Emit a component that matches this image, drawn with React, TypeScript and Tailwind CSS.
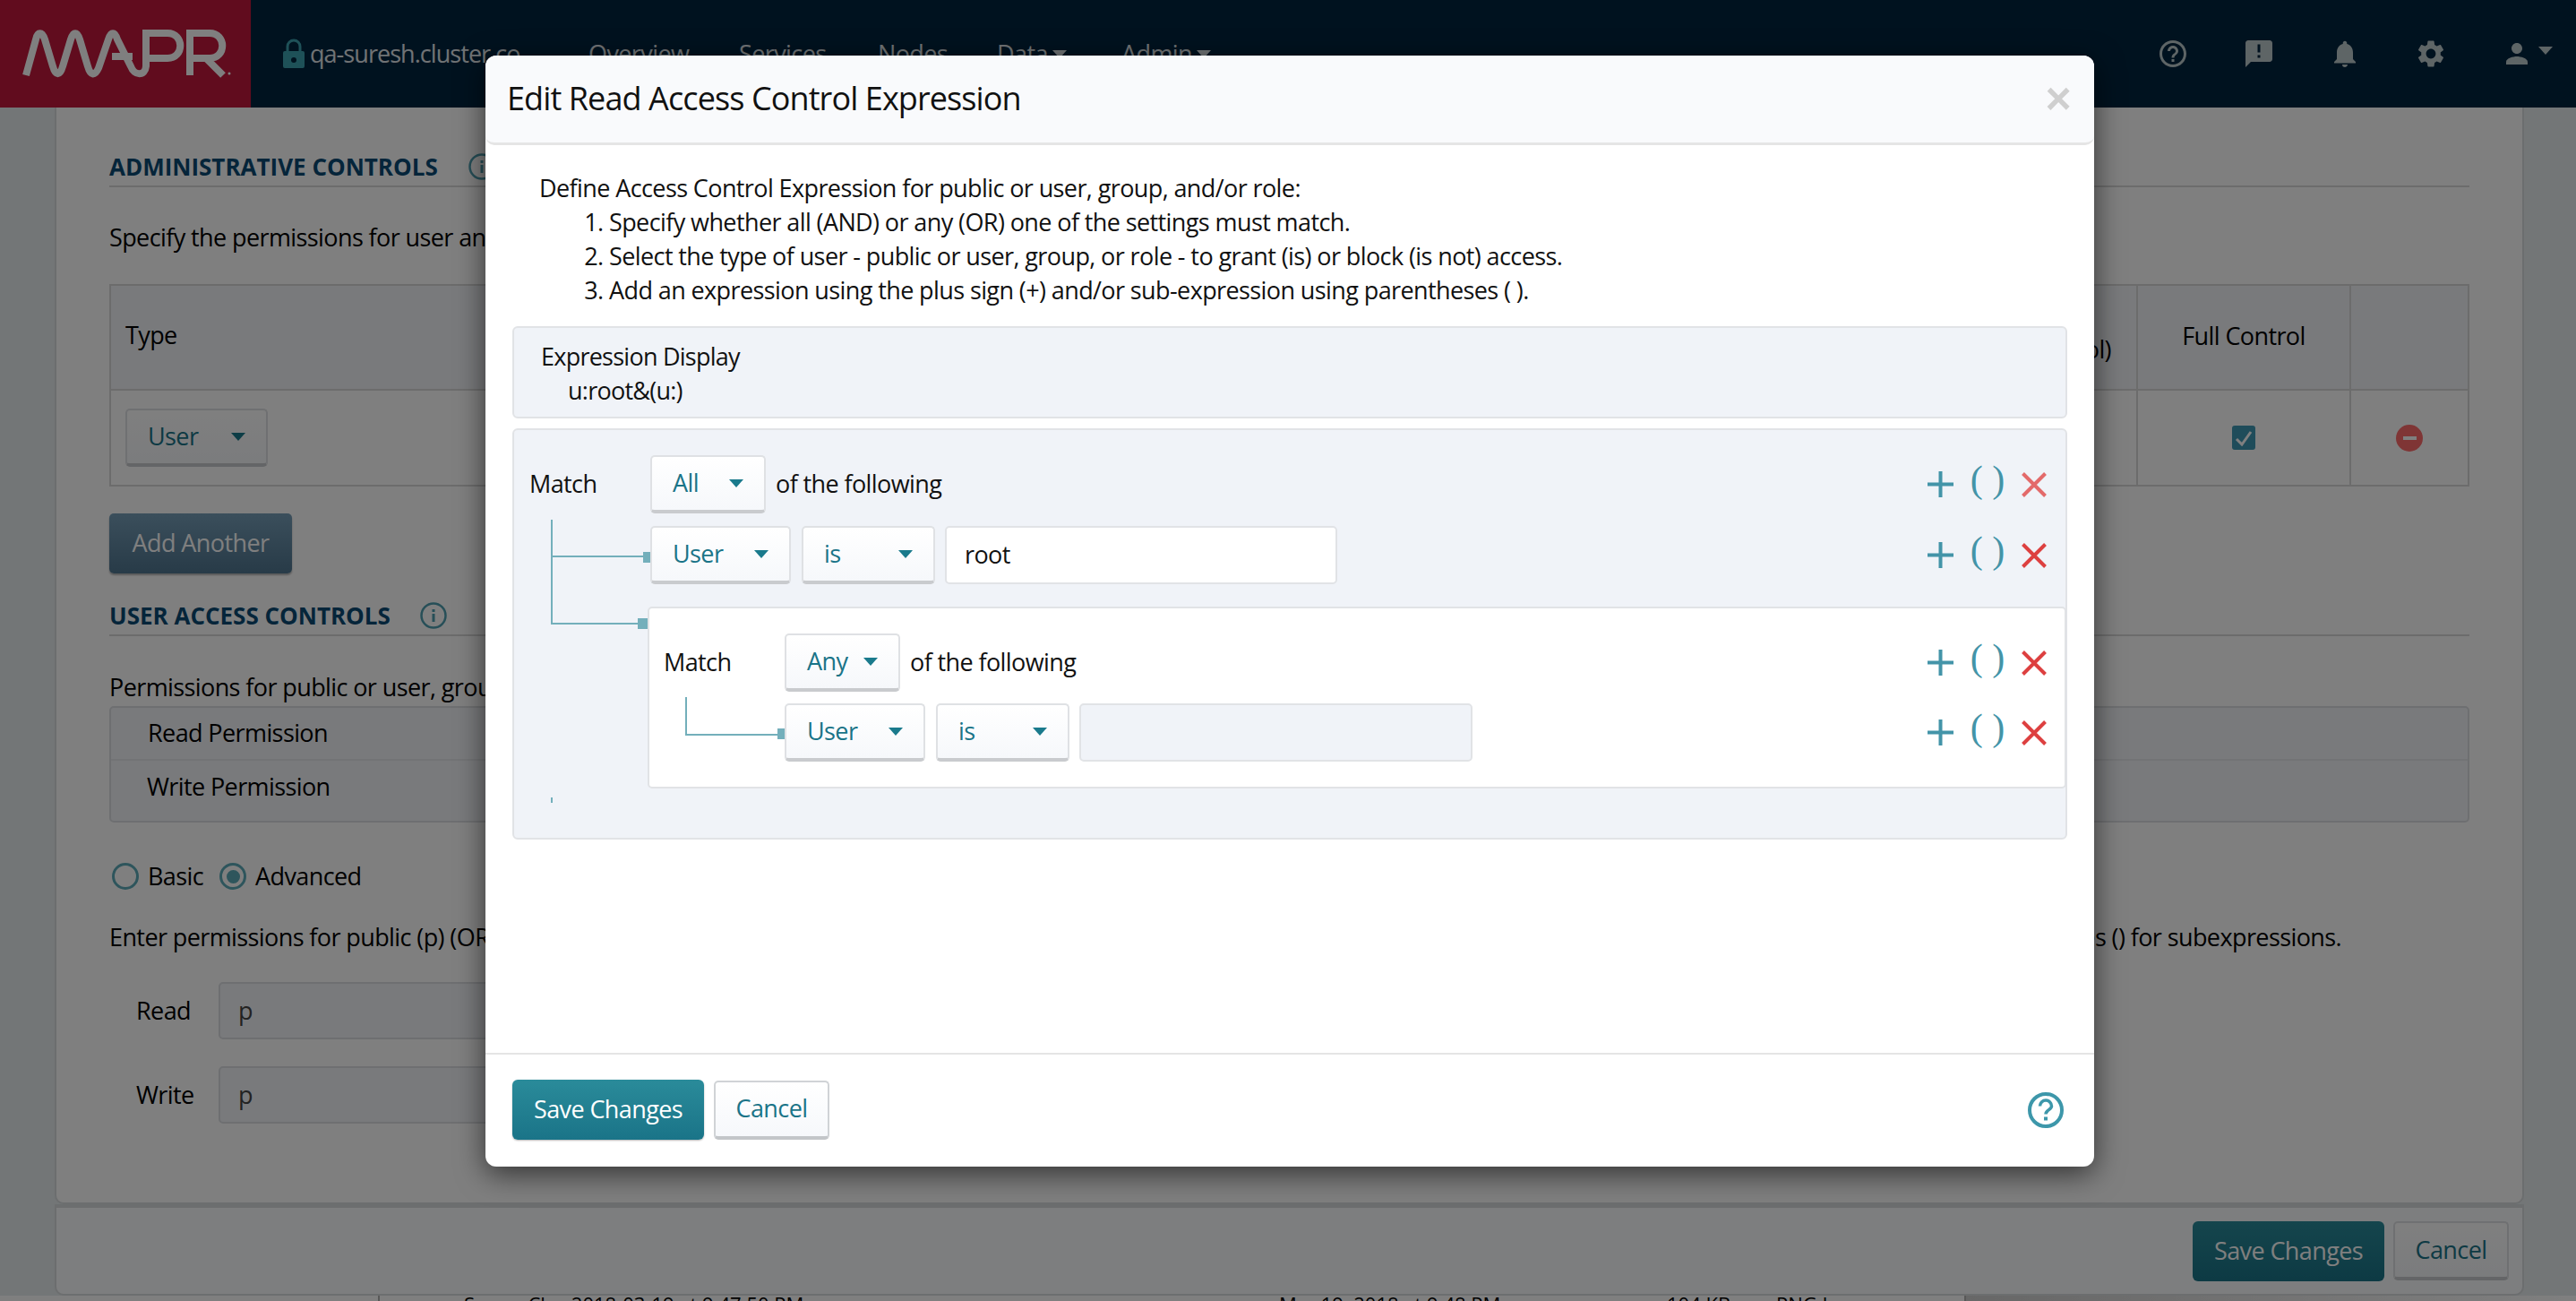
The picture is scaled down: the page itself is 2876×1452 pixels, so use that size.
import React from "react";
import { MdHelpOutline, MdAnnouncement, MdNotifications, MdSettings, MdPerson } from "react-icons/md";

function Caret({ className = "border-t-[#1a7a8c]" }: { className?: string }) {
  return <span className={`inline-block w-0 h-0 border-l-[8px] border-r-[8px] border-t-[9px] border-l-transparent border-r-transparent ${className}`} />;
}

function Select({ label, w }: { label: string; w: string }) {
  return (
    <div className={`${w} h-[65px] shrink-0 flex items-center justify-between pl-[23px] pr-[23px] rounded-[5px] border-2 border-b-4 border-[#dfe1e4] border-b-[#c9cbce] bg-gradient-to-b from-white to-[#f6f8fb] text-[#1a7488]`}>
      <span>{label}</span>
      <Caret />
    </div>
  );
}

function Actions({ faded = false, pr }: { faded?: boolean; pr: string }) {
  return (
    <div className={`ml-auto flex items-center ${pr}`}>
      <svg width="29" height="29" viewBox="0 0 29 29" className="text-[#4394a8]"><path d="M0 14.5H29M14.5 0V29" stroke="currentColor" strokeWidth="4" /></svg>
      <span className="ml-[21px] w-[34px] flex justify-center font-['Liberation_Serif',serif] font-light text-[42px] tracking-normal leading-[34px] -mt-[12px] text-[#4394a8] whitespace-pre">( )</span>
      <svg width="28" height="28" viewBox="0 0 28 28" className={`ml-[21px] ${faded ? "text-[#e36a6a]" : "text-[#dd4040]"}`}><path d="M1.5 1.5L26.5 26.5M26.5 1.5L1.5 26.5" stroke="currentColor" strokeWidth="4" /></svg>
    </div>
  );
}

function Info({ className = "" }: { className?: string }) {
  return (
    <svg width="30" height="30" viewBox="0 0 30 30" className={className}>
      <circle cx="15" cy="15" r="13.5" fill="none" stroke="#4f9fb0" strokeWidth="2.5" />
      <rect x="13.5" y="13" width="3" height="9" fill="#4f9fb0" />
      <rect x="13.5" y="8" width="3" height="3" fill="#4f9fb0" />
    </svg>
  );
}

function SectionTitle({ title, iconGap, top }: { title: string; iconGap: string; top: string }) {
  return (
    <div className={`${top} h-[38px] flex items-center`}>
      <span className="text-[26px] font-bold text-[#0a4a74] tracking-normal">{title}</span>
      <Info className={iconGap} />
    </div>
  );
}

function Logo() {
  return (
    <svg width="280" height="120" viewBox="0 0 280 120" fill="none" stroke="white" strokeWidth="8">
      <path d="M29 84L40 44C42 35 47 35 50 44L59 74C62 85 67 85 70 74L79 44C82 35 86 35 89 44L98 74C101 85 106 85 110 76L121 44C124 35 128 35 131 44L146 74C150 85 162 85 163 74V37H187C206 37 206 65 187 65H163" />
      <path d="M125 63H148" />
      <path d="M212 84V37H234C253 37 253 65 234 65H212M231 66L249 84" />
      <circle cx="256" cy="82" r="1.5" fill="white" stroke="none" />
    </svg>
  );
}

function Connector({ className }: { className: string }) {
  return <div className={`absolute bg-[#73afbb] ${className}`} />;
}

function Background() {
  return (
    <div className="flex flex-col h-[1452px] w-[2876px] overflow-hidden bg-[#e6ecee] text-[27px] tracking-[-0.6px] text-black">
      <header className="h-[120px] shrink-0 flex items-center bg-[#00243e]">
        <div className="w-[280px] h-[120px] bg-[#c2183c]"><Logo /></div>
        <svg width="26" height="34" viewBox="0 0 26 34" className="ml-[35px] text-[#3ca2b0]">
          <path d="M3 14H23Q25 14 25 16V31Q25 33 23 33H3Q1 33 1 31V16Q1 14 3 14Z M13 21a3 3 0 100 6a3 3 0 000-6Z" fill="currentColor" fillRule="evenodd" />
          <path d="M6 14V9a7 7 0 0114 0v5" stroke="currentColor" strokeWidth="3" fill="none" />
        </svg>
        <span className="ml-[5px] w-[311px] text-[#e0e6ea] tracking-[-0.95px]">qa-suresh.cluster.co</span>
        <nav className="flex items-center text-[#e0e6ea]">
          <span className="w-[168px]">Overview</span>
          <span className="w-[155px]">Services</span>
          <span className="w-[133px]">Nodes</span>
          <span className="w-[139px] flex items-center gap-[5px]">Data <Caret className="border-t-[#e0e6ea]" /></span>
          <span className="flex items-center gap-[5px]">Admin <Caret className="border-t-[#e0e6ea]" /></span>
        </nav>
        <div className="ml-auto flex items-center text-[#bccacc]">
          <MdHelpOutline size={36} />
          <MdAnnouncement size={36} className="ml-[60px]" />
          <MdNotifications size={36} className="ml-[60px]" />
          <MdSettings size={36} className="ml-[60px]" />
          <MdPerson size={36} className="ml-[60px]" />
          <Caret className="border-t-[#bccacc] ml-[6px] mr-[26px] -mt-[8px]" />
        </div>
      </header>

      <main className="ml-[61px] mr-[58px] h-[1224px] shrink-0 bg-white border-x-2 border-b-2 border-[#d8dcde] rounded-b-[10px] pl-[59px] pr-[59px] flex flex-col">
        <SectionTitle title="ADMINISTRATIVE CONTROLS" iconGap="ml-[34px]" top="mt-[47px]" />
        <div className="h-[2px] mt-[2px] bg-[#d8d8d8]" />
        <p className="mt-[38px] h-[36px] leading-[36px]">Specify the permissions for user and</p>

        <div className="mt-[34px] h-[226px] border-2 border-[#d8d8d8] flex flex-col">
          <div className="h-[117px] flex bg-[#f2f4f8] border-b-2 border-[#d8d8d8] font-[500]">
            <div className="flex-1 flex items-center justify-between pl-[16px] pr-[28px]">
              <span className="-mt-[4px]">Type</span>
              <span className="mt-[28px]">(Full Control)</span>
            </div>
            <div className="w-[238px] border-l-2 border-[#d8d8d8] text-center pt-[36px]">Full Control</div>
            <div className="w-[132px] border-l-2 border-[#d8d8d8]" />
          </div>
          <div className="flex-1 flex">
            <div className="flex-1 flex items-center pl-[16px]"><Select label="User" w="w-[159px]" /></div>
            <div className="w-[238px] border-l-2 border-[#d8d8d8] flex items-center justify-center">
              <span className="w-[26px] h-[27px] rounded-[3px] bg-[#3f98b4] flex items-center justify-center">
                <svg width="20" height="18" viewBox="0 0 20 18" fill="none"><path d="M2 10L8 16L18 2" stroke="white" strokeWidth="3" /></svg>
              </span>
            </div>
            <div className="w-[132px] border-l-2 border-[#d8d8d8] flex items-center justify-center">
              <span className="w-[30px] h-[30px] rounded-full bg-[#fe6a6a] flex items-center justify-center"><span className="w-[15px] h-[4px] bg-white" /></span>
            </div>
          </div>
        </div>

        <div className="mt-[30px] w-[204px] h-[67px] rounded-[5px] bg-gradient-to-b from-[#769eb8] to-[#507690] text-white flex items-center justify-center shadow-[0_2px_2px_rgba(0,0,0,0.3)]">Add Another</div>

        <SectionTitle title="USER ACCESS CONTROLS" iconGap="ml-[33px]" top="mt-[28px]" />
        <div className="h-[2px] mt-[2px] bg-[#d8d8d8]" />
        <p className="mt-[39px] h-[36px] leading-[36px]">Permissions for public or user, group, and/or role</p>

        <div className="mt-[3px] h-[130px] rounded-[5px] border-2 border-[#dcdfe3] bg-[#f2f4f8] font-[500] flex flex-col">
          <div className="h-[59px] flex items-center pl-[41px] border-b-2 border-[#e4e7ea]">Read Permission</div>
          <div className="flex-1 flex items-start pt-[9px] pl-[40px]">Write Permission</div>
        </div>

        <div className="mt-[42px] flex items-center h-[36px]">
          <span className="ml-[3px] w-[30px] h-[30px] rounded-full border-[3px] border-[#5cabb9] bg-white" />
          <span className="ml-[10px]">Basic</span>
          <span className="ml-[18px] w-[30px] h-[30px] rounded-full border-[3px] border-[#5cabb9] flex items-center justify-center"><span className="w-[15px] h-[15px] rounded-full bg-[#5cabb9]" /></span>
          <span className="ml-[10px]">Advanced</span>
        </div>

        <div className="mt-[32px] h-[36px] leading-[36px] w-[2492px] flex justify-between">
          <span>Enter permissions for public (p) (OR user, group, or role) and</span>
          <span>use parentheses () for subexpressions.</span>
        </div>

        <div className="mt-[32px] flex items-center h-[64px]">
          <span className="ml-[30px] w-[92px] font-[500]">Read</span>
          <div className="w-[900px] h-[64px] rounded-[5px] border-2 border-[#dcdfe3] bg-[#f2f4f8] pl-[20px] flex items-center text-[#444]">p</div>
        </div>
        <div className="mt-[30px] flex items-center h-[64px]">
          <span className="ml-[30px] w-[92px] font-[500]">Write</span>
          <div className="w-[900px] h-[64px] rounded-[5px] border-2 border-[#dcdfe3] bg-[#f2f4f8] pl-[20px] flex items-center text-[#444]">p</div>
        </div>
      </main>

      <footer className="ml-[61px] mr-[58px] h-[102px] shrink-0 bg-[#fafcfe] border-x-2 border-t-4 border-b-2 border-[#d8dcde] rounded-b-[10px] flex items-center justify-end gap-[10px] pr-[15px]">
        <div className="w-[214px] h-[67px] rounded-[6px] bg-gradient-to-b from-[#2a8b9a] to-[#1a7488] text-white flex items-center justify-center">Save Changes</div>
        <div className="w-[129px] h-[66px] rounded-[5px] border-2 border-b-4 border-[#dfe1e4] border-b-[#c9cbce] bg-gradient-to-b from-white to-[#f6f8fb] text-[#1a7488] flex items-center justify-center">Cancel</div>
      </footer>

      <div className="h-[6px] bg-white flex text-[22px] tracking-normal overflow-hidden">
        <div className="w-[424px] border-r-2 border-[#b0b0b0]" />
        <div className="w-[1771px] border-r-2 border-[#b0b0b0] relative leading-[26px]">
          <span className="absolute left-[94px] top-[-4px] whitespace-nowrap">Server Clay 2018-03-19 at 9.47.50 PM</span>
          <span className="absolute left-[1004px] top-[-4px] whitespace-nowrap">Mar 19, 2018 at 9:48 PM</span>
          <span className="absolute left-[1437px] top-[-4px] whitespace-nowrap">104 KB</span>
          <span className="absolute left-[1559px] top-[-4px] whitespace-nowrap">PNG I</span>
        </div>
        <div className="flex-1 bg-gradient-to-r from-[#cfcfcf] to-white" />
      </div>
    </div>
  );
}

function Modal() {
  return (
    <div className="absolute left-[542px] top-[62px] w-[1796px] h-[1240px] bg-white rounded-[12px] shadow-[0_8px_32px_rgba(0,0,0,0.6)] flex flex-col text-[27px] tracking-[-0.6px] text-[#111]">
      <div className="h-[100px] shrink-0 bg-[#f9fafc] rounded-t-[12px] rounded-b-[10px] border-b-[3px] border-[#e5e5e5] flex items-center justify-between pl-[24px] pr-[26px] pb-[2px]">
        <h2 className="text-[36px] tracking-[-0.9px] font-normal text-[#111]">Edit Read Access Control Expression</h2>
        <span className="font-['Liberation_Sans',sans-serif] text-[50px] font-bold text-[#cfcfcf] leading-none">×</span>
      </div>

      <div className="flex-1 px-[30px]">
        <div className="pt-[29px] pl-[30px] leading-[38px]">
          <p>Define Access Control Expression for public or user, group, and/or role:</p>
          <ol className="pl-[78px] list-decimal">
            <li>Specify whether all (AND) or any (OR) one of the settings must match.</li>
            <li>Select the type of user - public or user, group, or role - to grant (is) or block (is not) access.</li>
            <li>Add an expression using the plus sign (+) and/or sub-expression using parentheses ( ).</li>
          </ol>
        </div>

        <div className="mt-[21px] h-[103px] rounded-[6px] border-2 border-[#e1e3e6] bg-[#f0f3f8] pl-[30px] pt-[13px] leading-[38px] tracking-[-0.75px]">
          <div>Expression Display</div>
          <div className="pl-[30px]">u:root&amp;(u:)</div>
        </div>

        <div className="relative mt-[11px] h-[459px] rounded-[6px] border-2 border-[#e1e3e6] bg-[#f0f3f8] pt-[28px]">
          <Connector className="left-[41px] top-[100px] w-[2px] h-[116px]" />
          <Connector className="left-[41px] top-[140px] w-[103px] h-[2px]" />
          <Connector className="left-[144px] top-[136px] w-[8px] h-[12px]" />
          <Connector className="left-[41px] top-[215px] w-[97px] h-[2px]" />
          <Connector className="left-[138px] top-[210px] w-[11px] h-[12px]" />
          <Connector className="left-[41px] top-[410px] w-[2px] h-[6px]" />

          <div className="flex items-center pl-[17px] h-[65px]">
            <span className="w-[135px]">Match</span>
            <Select label="All" w="w-[129px]" />
            <span className="ml-[11px]">of the following</span>
            <Actions faded pr="pr-[21px]" />
          </div>
          <div className="flex items-center pl-[152px] h-[65px] mt-[14px]">
            <Select label="User" w="w-[157px]" />
            <Select label="is" w="w-[149px] ml-[12px]" />
            <div className="ml-[11px] w-[438px] h-[65px] rounded-[5px] border-2 border-[#e1e3e6] bg-white pl-[20px] flex items-center">root</div>
            <Actions pr="pr-[21px]" />
          </div>

          <div className="relative ml-[149px] -mr-[1px] mt-[25px] h-[203px] rounded-[5px] border-2 border-[#e1e3e6] bg-white pt-[28px]">
            <Connector className="left-[40px] top-[99px] w-[2px] h-[42px]" />
            <Connector className="left-[40px] top-[140px] w-[103px] h-[2px]" />
            <Connector className="left-[143px] top-[134px] w-[8px] h-[12px]" />
            <div className="flex items-center pl-[16px] h-[65px]">
              <span className="w-[135px]">Match</span>
              <Select label="Any" w="w-[129px]" />
              <span className="ml-[11px]">of the following</span>
              <Actions pr="pr-[20px]" />
            </div>
            <div className="flex items-center pl-[151px] h-[65px] mt-[13px]">
              <Select label="User" w="w-[157px]" />
              <Select label="is" w="w-[149px] ml-[12px]" />
              <div className="ml-[11px] w-[439px] h-[65px] rounded-[5px] border-2 border-[#e1e3e6] bg-[#f0f3f8]" />
              <Actions pr="pr-[20px]" />
            </div>
          </div>
        </div>
      </div>

      <div className="h-[127px] shrink-0 border-t-2 border-[#e5e5e5] flex items-center pl-[30px] pr-[34px] pb-[2px]">
        <div className="w-[214px] h-[67px] rounded-[6px] bg-gradient-to-b from-[#2a8b9a] to-[#1a7488] text-white flex items-center justify-center shadow-[0_1px_2px_rgba(0,0,0,0.3)]">Save Changes</div>
        <div className="ml-[11px] w-[129px] h-[66px] rounded-[5px] border-2 border-b-4 border-[#d0d3d6] border-b-[#c3c6c9] bg-gradient-to-b from-white to-[#f6f8fb] text-[#1a7488] flex items-center justify-center">Cancel</div>
        <svg width="40" height="40" viewBox="0 0 40 40" className="ml-auto">
          <circle cx="20" cy="20" r="18" fill="none" stroke="#3d97aa" strokeWidth="4" />
          <path d="M13.5 15.5a6.5 6.5 0 1113 0c0 4-6.5 4.5-6.5 9" fill="none" stroke="#3d97aa" strokeWidth="3.5" />
          <rect x="18" y="27.5" width="4" height="4" fill="#3d97aa" />
        </svg>
      </div>
    </div>
  );
}

export default function App() {
  return (
    <div className="relative w-[2876px] h-[1452px] overflow-hidden font-['Open_Sans',sans-serif]">
      <Background />
      <div className="absolute inset-0 bg-black/50" />
      <Modal />
    </div>
  );
}
